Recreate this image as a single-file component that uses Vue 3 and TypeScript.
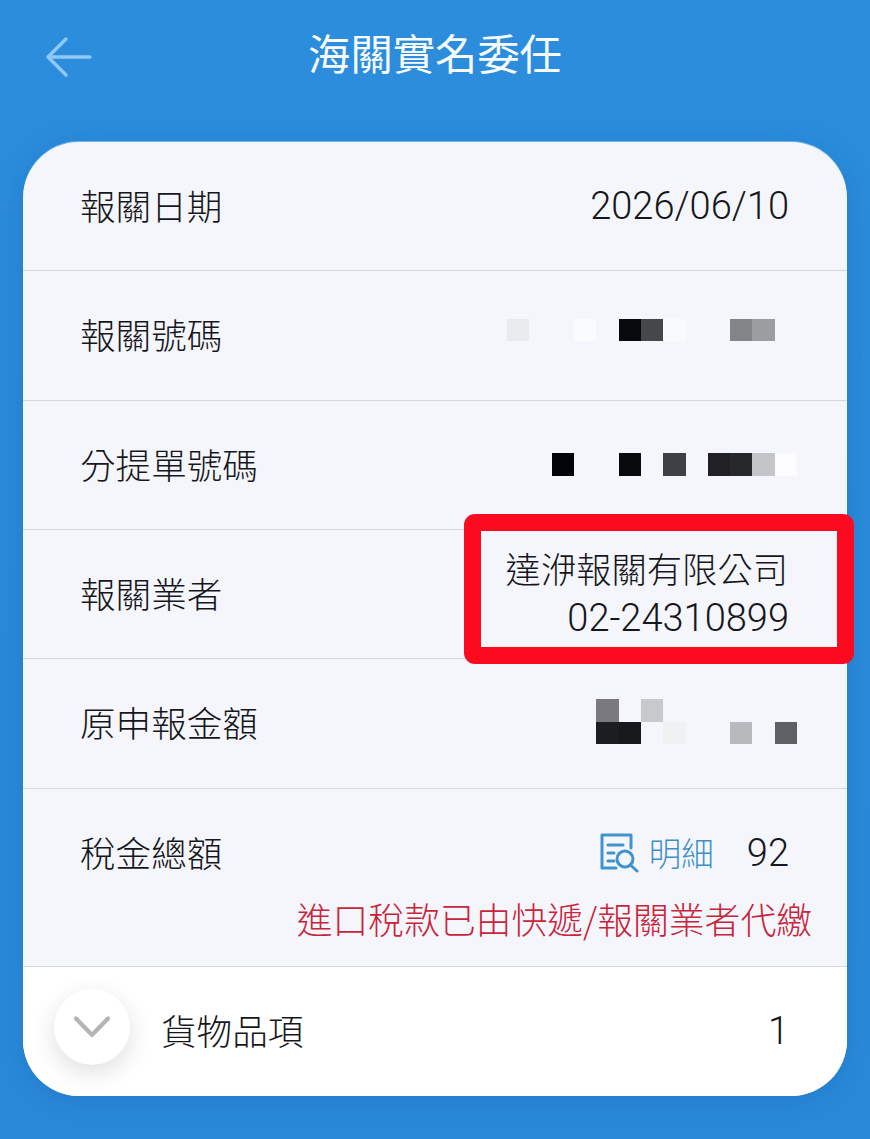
<script setup lang="ts">
interface Cell { c: number; r: number; color: string }

const ref2: Cell[] = [
  { c: 1, r: 1, color: '#e9eaee' }, { c: 4, r: 1, color: '#fafbfd' }, { c: 6, r: 1, color: '#08090d' },
  { c: 7, r: 1, color: '#46474b' }, { c: 8, r: 1, color: '#f9fafc' }, { c: 11, r: 1, color: '#838487' },
  { c: 12, r: 1, color: '#9c9da0' },
]
const ref3: Cell[] = [
  { c: 3, r: 1, color: '#020307' }, { c: 6, r: 1, color: '#08090d' }, { c: 8, r: 1, color: '#3f4044' },
  { c: 10, r: 1, color: '#212125' }, { c: 11, r: 1, color: '#27282c' }, { c: 12, r: 1, color: '#c4c5c9' },
  { c: 13, r: 1, color: '#fcfcfe' },
]
const amount: Cell[] = [
  { c: 5, r: 1, color: '#7a7a7e' }, { c: 7, r: 1, color: '#c8c9cd' },
  { c: 5, r: 2, color: '#1c1d21' }, { c: 6, r: 2, color: '#17181c' }, { c: 8, r: 2, color: '#f0f1f3' },
  { c: 11, r: 2, color: '#b8b9bd' }, { c: 13, r: 2, color: '#5f6064' },
]
const cellStyle = (x: Cell) => ({ gridColumn: x.c, gridRow: x.r, background: x.color })
</script>

<template>
  <div class="page">
    <header class="bar">
      <svg class="back" viewBox="0 0 46 40" fill="none" stroke="#8fc8f6" stroke-width="3.4" stroke-linecap="round" stroke-linejoin="round">
        <path d="M44 20H3M20 2 2 20l18 18" />
      </svg>
      <h1 class="title">海關實名委任</h1>
    </header>

    <section class="card">
      <div class="row first">
        <span class="lab">報關日期</span><span class="num">2026/06/10</span>
      </div>
      <div class="row r130">
        <span class="lab">報關號碼</span>
        <div class="mosaic one up"><i v-for="(x, i) in ref2" :key="i" :style="cellStyle(x)"></i></div>
      </div>
      <div class="row r129">
        <span class="lab">分提單號碼</span>
        <div class="mosaic one"><i v-for="(x, i) in ref3" :key="i" :style="cellStyle(x)"></i></div>
      </div>
      <div class="row r129">
        <span class="lab">報關業者</span>
        <div class="stack"><span class="company">達洢報關有限公司</span><span class="num">02-24310899</span></div>
      </div>
      <div class="row r130">
        <span class="lab">原申報金額</span>
        <div class="mosaic two"><i v-for="(x, i) in amount" :key="i" :style="cellStyle(x)"></i></div>
      </div>
      <div class="tax">
        <div class="taxline">
          <span class="lab">稅金總額</span>
          <div class="taxright">
            <svg class="detail-icon" viewBox="0 0 40 40" fill="none" stroke="#3f93cf" stroke-width="3" stroke-linecap="round" stroke-linejoin="round">
              <path d="M16 35H2V2h29v13" />
              <path d="M8 12h15M8 20h6M8 28h6" />
              <circle cx="25" cy="26" r="8" />
              <path d="M30.500 32 37 38" />
            </svg>
            <span class="link">明細</span>
            <span class="num amount">92</span>
          </div>
        </div>
        <p class="note">進口稅款已由快遞/報關業者代繳</p>
      </div>
      <div class="items">
        <div class="toggle">
          <svg viewBox="0 0 36 22" fill="none" stroke="#b4b4b4" stroke-width="4.2" stroke-linecap="round" stroke-linejoin="round">
            <path d="M2 2.500 18 19 34 2.500" />
          </svg>
        </div>
        <span class="lab">貨物品項</span>
        <span class="num count">1</span>
      </div>
      <div class="highlight"></div>
    </section>
  </div>
</template>

<style scoped>
.page {
  width: 870px;
  height: 1139px;
  overflow: hidden;
  box-sizing: border-box;
  padding: 0 23px;
  background: linear-gradient(180deg, #2b8ddc 0%, #2a8bd9 50%, #2a8ad8 100%);
  font-family: "Noto Sans CJK TC", "Noto Sans", sans-serif;
  font-weight: 300;
  font-size: 35.600px;
  color: #16171b;
}
.bar {
  height: 142px;
  position: relative;
  box-sizing: border-box;
  padding-top: 24px;
}
.back {
  position: absolute;
  left: 23px;
  top: 37px;
  width: 46px;
  height: 40px;
}
.title {
  margin: 0;
  text-align: center;
  font-size: 42.300px;
  line-height: 56px;
  font-weight: 400;
  color: #f7fbff;
}
.card {
  position: relative;
  width: 824px;
  height: 954px;
  display: flex;
  flex-direction: column;
  background: #f5f6fc;
  border-radius: 56px;
  box-shadow: 0 -1px 0 #6db5ec, 0 6px 30px rgba(15, 90, 170, 0.28);
}
.row {
  box-sizing: border-box;
  display: flex;
  align-items: center;
  justify-content: space-between;
  padding: 0 58px;
  border-bottom: 1px solid #d6d7dd;
}
.first { height: 128.500px; }
.r130 { height: 130px; }
.r129 { height: 129px; }
.lab { margin-bottom: 3px; margin-left: -1px; }
.num {
  font-family: "Roboto", "Noto Sans CJK TC", sans-serif;
  font-weight: 300;
  font-size: 38px;
}
.mosaic {
  display: grid;
  grid-template-columns: repeat(13, 22.300px);
  grid-auto-rows: 22.500px;
  margin-right: -8px;
}
.one { grid-template-rows: 22.500px; }
.two { grid-template-rows: 22.500px 22.500px; margin-bottom: 3px; }
.up { margin-bottom: 10px; }
.stack {
  display: flex;
  flex-direction: column;
  align-items: flex-end;
  line-height: 50px;
  margin-top: -1px;
}
.company { margin-right: 1px; font-size: 35.300px; }
.tax {
  box-sizing: border-box;
  height: 178px;
  padding: 38px 35px 0 58px;
  border-bottom: 1px solid #d6d7dd;
}
.taxline {
  display: flex;
  align-items: center;
  justify-content: space-between;
  height: 52px;
  padding-right: 23px;
}
.taxright {
  display: flex;
  align-items: center;
}
.detail-icon {
  width: 40px;
  height: 40px;
  margin-right: 9px;
}
.link {
  font-size: 32.500px;
  color: #3f8fc6;
  margin-bottom: 3px;
}
.amount { margin-left: 33px; }
.note {
  margin: 14px 0 0;
  text-align: right;
  color: #c8243a;
  font-size: 35.800px;
  line-height: 50px;
}
.items {
  flex: 1;
  display: flex;
  align-items: center;
  padding: 0 58px 0 31px;
  background: #fff;
  border-radius: 0 0 56px 56px;
}
.toggle {
  width: 76px;
  height: 76px;
  margin-right: 32px;
  margin-top: -8px;
  border-radius: 50%;
  background: #fff;
  display: flex;
  align-items: center;
  justify-content: center;
  box-shadow: 0 8px 24px rgba(0, 0, 0, 0.13);
}
.toggle svg {
  width: 36px;
  height: 22px;
}
.count { margin-left: auto; }
.highlight {
  position: absolute;
  left: 441px;
  top: 372px;
  width: 390px;
  height: 150px;
  box-sizing: border-box;
  border: 17px solid #fb0a20;
  border-radius: 11px;
}
</style>
